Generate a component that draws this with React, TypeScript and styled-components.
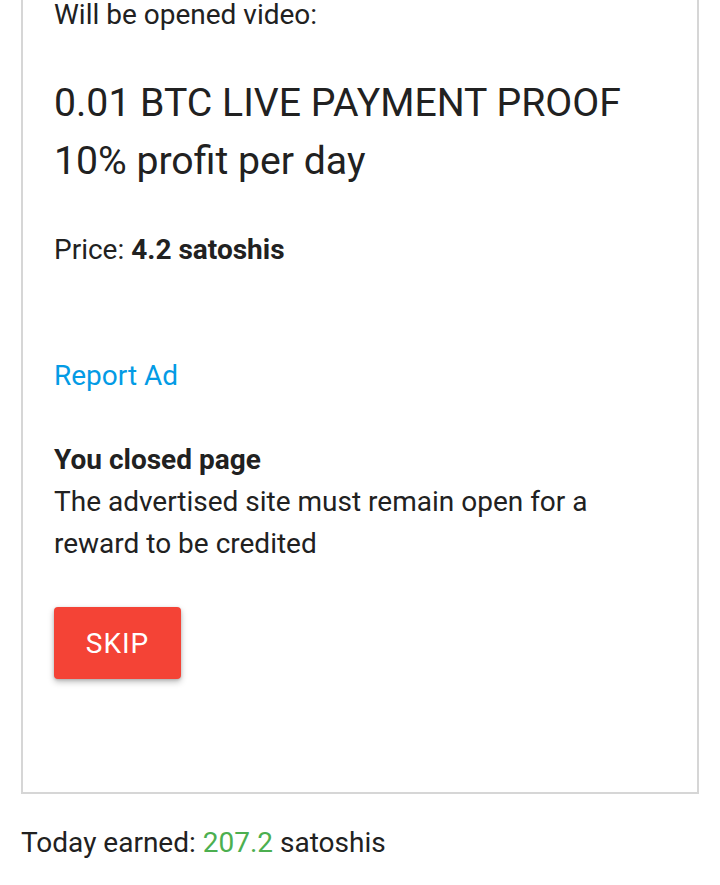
import React from 'react';
import styled, { createGlobalStyle } from 'styled-components';

const textColor = '#212121';
const borderColor = '#d6d6d6';

const GlobalStyle = createGlobalStyle`
  html, body {
    margin: 0;
    padding: 0;
    background: #ffffff;
  }
  body {
    font-family: Roboto, 'Liberation Sans', sans-serif;
    color: ${textColor};
    font-size: 28px;
    line-height: 42px;
  }
`;

const Page = styled.div`
  padding: 0 21px 40px 21px;
  width: 678px;
`;

const Card = styled.section`
  margin-top: -39px;
  border: 2px solid ${borderColor};
  padding: 31px 31px 113px 31px;
`;

const Line = styled.p<{ gap?: number }>`
  margin: ${(props) => props.gap ?? 0}px 0 0 0;
  font-size: 28px;
  line-height: 42px;
`;

const Title = styled.h2`
  margin: 38px 0 0 0;
  font-size: 39.2px;
  line-height: 58px;
  font-weight: 400;
`;

const Strong = styled.b`
  font-weight: 700;
`;

const ReportLink = styled.a`
  display: block;
  margin-top: 84px;
  color: #039be5;
  text-decoration: none;
  font-size: 28px;
  line-height: 42px;
`;

const Notice = styled.div`
  margin-top: 42px;
`;

const SkipButton = styled.button`
  display: block;
  margin-top: 42px;
  width: 127px;
  height: 72px;
  border: none;
  border-radius: 4px;
  background: #f44336;
  color: #ffffff;
  font-family: Roboto, 'Liberation Sans', sans-serif;
  font-size: 28px;
  letter-spacing: 1px;
  box-shadow: 0 3px 6px rgba(0, 0, 0, 0.25), 0 1px 3px rgba(0, 0, 0, 0.15);
  cursor: pointer;
`;

const Earned = styled.p`
  margin: 28px 0 0 0;
  font-size: 28px;
  line-height: 42px;
`;

const Green = styled.span`
  color: #4caf50;
`;

export default function App() {
  return (
    <>
      <GlobalStyle />
      <Page>
        <Card>
          <Line>Will be opened video:</Line>
          <Title>
            0.01 BTC LIVE PAYMENT PROOF
            <br />
            10% profit per day
          </Title>
          <Line gap={39}>
            Price: <Strong>4.2 satoshis</Strong>
          </Line>
          <ReportLink href="#">Report Ad</ReportLink>
          <Notice>
            <Line>
              <Strong>You closed page</Strong>
            </Line>
            <Line>The advertised site must remain open for a reward to be credited</Line>
          </Notice>
          <SkipButton>SKIP</SkipButton>
        </Card>
        <Earned>
          Today earned: <Green>207.2</Green> satoshis
        </Earned>
      </Page>
    </>
  );
}
